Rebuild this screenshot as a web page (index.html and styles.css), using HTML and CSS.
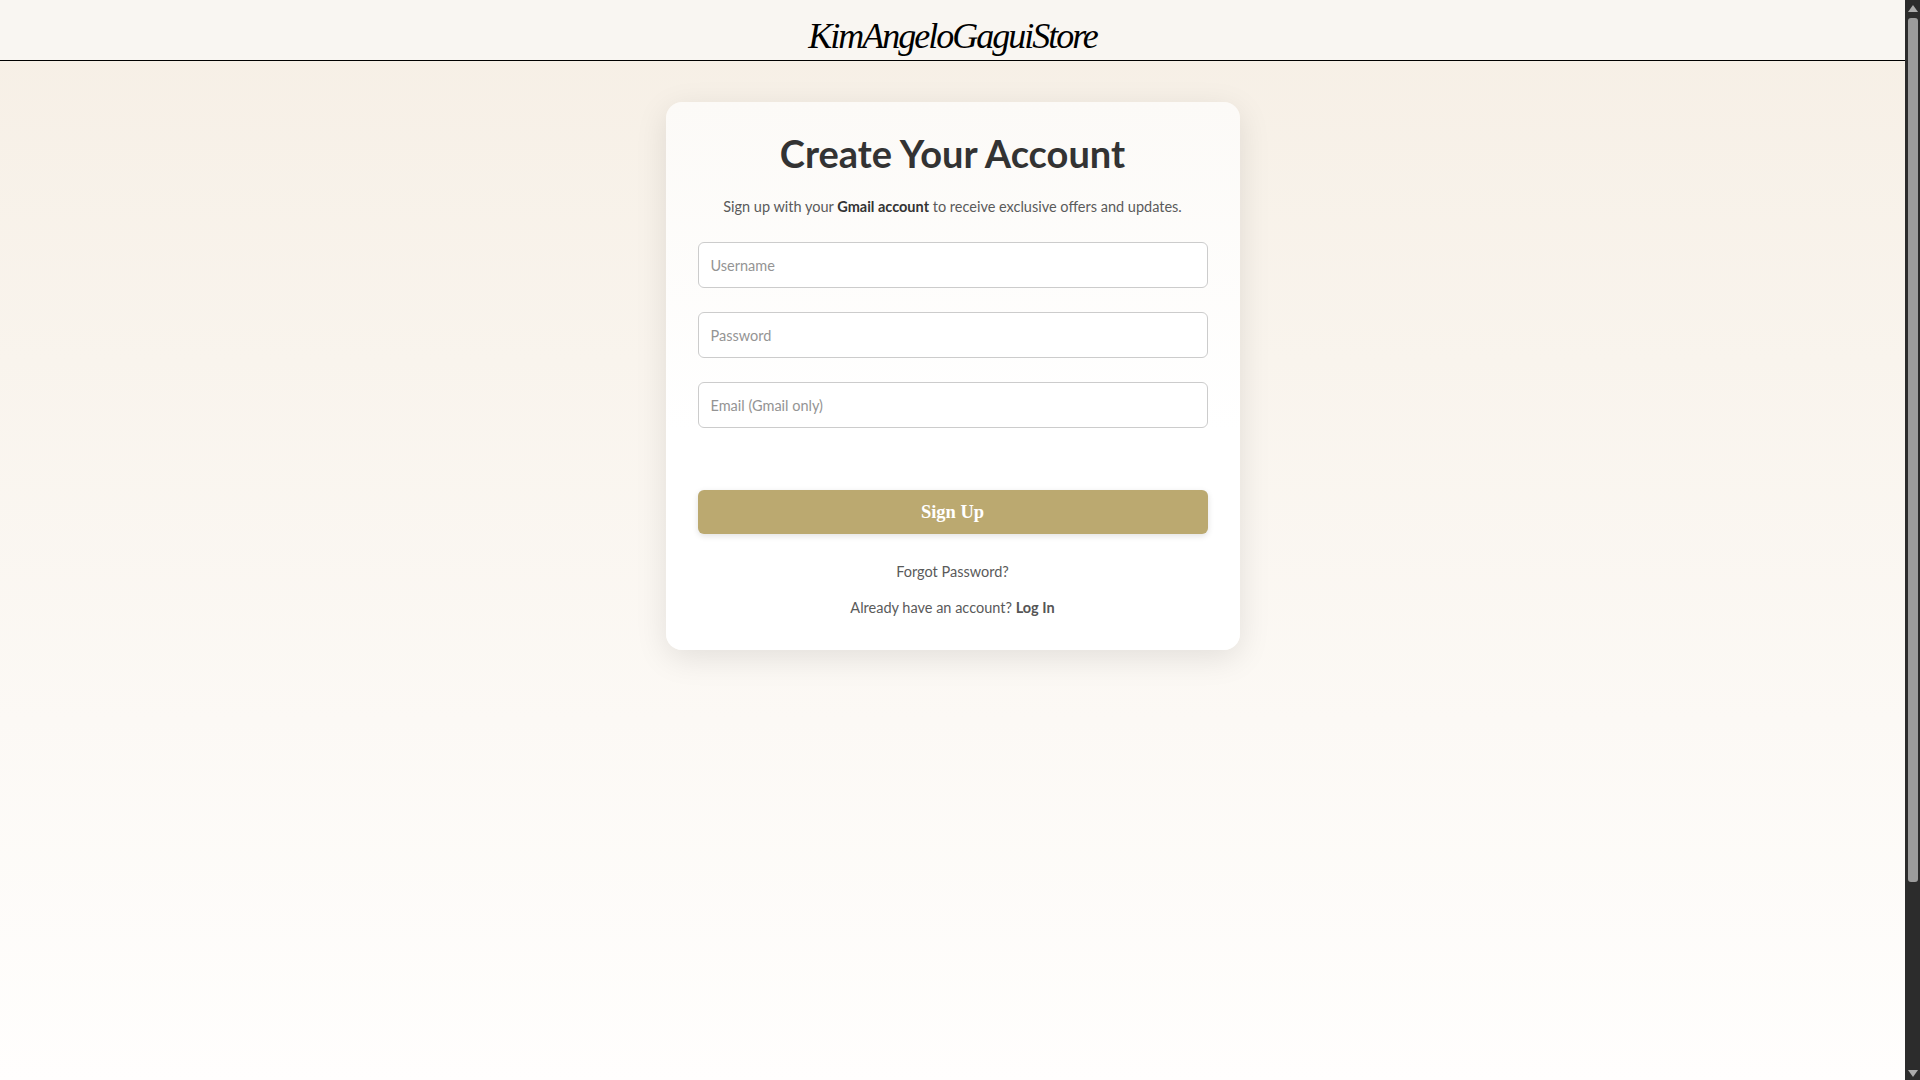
FILE: index.html
```html
<!doctype html>
<html lang="en">
<head>
    <meta charset="UTF-8">
    <meta name="viewport" content="width=device-width, initial-scale=1.0">
    <title>Create Your Account</title>
    <link rel="stylesheet" href="styles.css">
</head>
<body>
<div class="page">
    <div class="main">
        <header class="top-bar">
            <a class="brand" href="javascript:;">KimAngeloGaguiStore</a>
        </header>
        <div class="content">
            <form class="signup-card">
                <h1>Create Your Account</h1>
                <p class="intro">Sign up with your <strong>Gmail account</strong> to receive exclusive offers and updates.</p>
                <input class="field" type="text" placeholder="Username">
                <input class="field" type="password" placeholder="Password">
                <input class="field" type="email" placeholder="Email (Gmail only)">
                <button class="submit" type="button">Sign Up</button>
                <p class="link-row"><a href="javascript:;">Forgot Password?</a></p>
                <p class="link-row">Already have an account? <a class="strong-link" href="javascript:;">Log In</a></p>
            </form>
        </div>
    </div>
    <div class="scrollbar">
        <span class="arrow arrow-up"></span>
        <div class="track"><div class="thumb"></div></div>
        <span class="arrow arrow-down"></span>
    </div>
</div>
</body>
</html>
```

FILE: styles.css
```css
* {
    margin: 0;
    padding: 0;
    box-sizing: border-box;
}

html,
body {
    width: 100%;
    height: 100%;
    overflow: hidden;
}

body {
    font-family: "Lato", "Liberation Sans", sans-serif;
    color: #333;
}

a {
    text-decoration: none;
    color: inherit;
}

.page {
    display: flex;
    height: 100%;
}

.main {
    flex: 1;
    display: flex;
    flex-direction: column;
    background: linear-gradient(#f6efe5, #fffefd);
}

.top-bar {
    height: 61px;
    padding-top: 12px;
    display: flex;
    justify-content: center;
    align-items: center;
    background-color: #f9f6f2;
    border-bottom: 1px solid #000;
}

.brand {
    font-family: "Liberation Serif", cursive;
    font-style: italic;
    font-size: 36px;
    letter-spacing: -2px;
    color: #000;
}

.content {
    flex: 1;
    padding-top: 41px;
    display: flex;
    justify-content: center;
    align-items: flex-start;
}

.signup-card {
    width: 574px;
    height: 548px;
    padding: 29px 32px 32px;
    display: flex;
    flex-direction: column;
    background: linear-gradient(#fcfaf7, #fff 60%);
    border-radius: 16px;
    box-shadow: 0 8px 32px rgba(0, 0, 0, 0.1);
}

.signup-card h1 {
    font-size: 38px;
    line-height: 44px;
    font-weight: 700;
    text-align: center;
    color: #333;
}

.intro {
    margin-top: 21px;
    font-size: 14.5px;
    line-height: 22px;
    text-align: center;
    color: #5a5a5a;
}

.intro strong {
    font-weight: 700;
    color: #333;
}

.field {
    height: 46px;
    flex-shrink: 0;
    margin-top: 24px;
    padding: 0 12px;
    font: inherit;
    font-size: 14.5px;
    color: #333;
    background-color: #fff;
    border: 1px solid #ccc;
    border-radius: 6px;
}

.field::placeholder {
    color: #949494;
}

.submit {
    height: 44px;
    flex-shrink: 0;
    margin-top: 62px;
    font-family: "Liberation Serif", serif;
    font-size: 18.5px;
    font-weight: 700;
    color: #fff;
    background-color: #bba970;
    border: 0;
    border-radius: 6px;
    box-shadow: 0 2px 6px rgba(0, 0, 0, 0.12);
}

.link-row {
    margin-top: 14px;
    font-size: 14.5px;
    line-height: 22px;
    text-align: center;
    color: #5a5a5a;
}

.submit + .link-row {
    margin-top: 27px;
}

.strong-link {
    font-weight: 700;
    color: #555;
}

.scrollbar {
    width: 15px;
    display: flex;
    flex-direction: column;
    align-items: center;
    background-color: #2c2c2c;
}

.arrow {
    width: 0;
    height: 0;
    border-left: 5px solid transparent;
    border-right: 5px solid transparent;
}

.arrow-up {
    margin: 5px 0 6px;
    border-bottom: 7px solid #ababab;
}

.arrow-down {
    margin: 6px 0 3px;
    border-top: 7px solid #ababab;
}

.track {
    flex: 1;
    width: 100%;
    display: flex;
    justify-content: center;
}

.thumb {
    width: 10px;
    height: 864px;
    background-color: #9c9c9c;
    border-radius: 3px;
}
```
